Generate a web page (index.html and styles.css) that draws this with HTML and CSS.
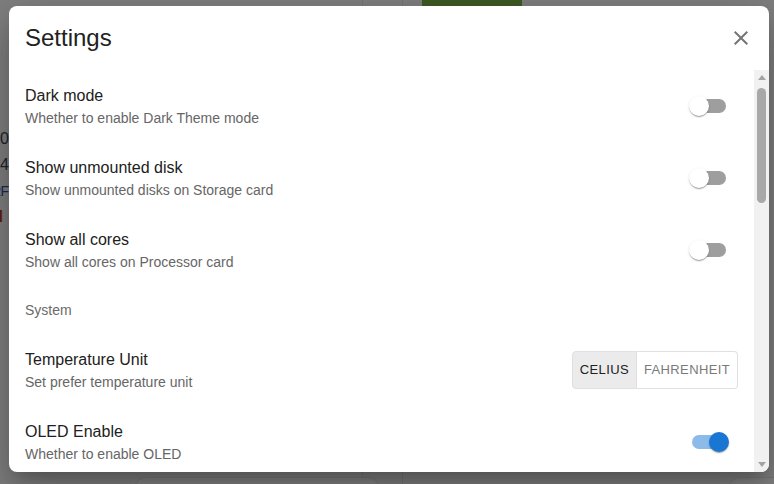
FILE: index.html
```html
<!DOCTYPE html>
<html lang="en">
<head>
<meta charset="utf-8">
<title>Settings</title>
<link rel="stylesheet" href="styles.css">
</head>
<body>
<div class="backdrop">
  <div class="bg-line bg-line-a"></div>
  <div class="bg-line bg-line-b"></div>
  <div class="bg-green"></div>
  <div class="bg-texts">
    <span class="t-dark">100</span>
    <span class="t-dark">24</span>
    <span class="t-navy">ERF</span>
    <span class="t-red">l</span>
  </div>
  <div class="bg-card bg-card-a"></div>
  <div class="bg-card bg-card-b"></div>
</div>

<div class="dialog" role="dialog" aria-label="Settings">
  <header class="dialog-header">
    <h2 class="dialog-title">Settings</h2>
    <button class="close-btn" aria-label="close">
      <svg viewBox="0 0 24 24" width="24" height="24"><path d="M19 6.41 17.59 5 12 10.59 6.41 5 5 6.41 10.59 12 5 17.59 6.41 19 12 13.41 17.59 19 19 17.59 13.41 12z" fill="currentColor"/></svg>
    </button>
  </header>
  <div class="dialog-body">
    <ul class="list">
      <li class="item">
        <div class="item-text">
          <div class="primary">Dark mode</div>
          <div class="secondary">Whether to enable Dark Theme mode</div>
        </div>
        <span class="switch"><span class="track"></span><span class="thumb"></span></span>
      </li>
      <li class="item">
        <div class="item-text">
          <div class="primary">Show unmounted disk</div>
          <div class="secondary">Show unmounted disks on Storage card</div>
        </div>
        <span class="switch"><span class="track"></span><span class="thumb"></span></span>
      </li>
      <li class="item">
        <div class="item-text">
          <div class="primary">Show all cores</div>
          <div class="secondary">Show all cores on Processor card</div>
        </div>
        <span class="switch"><span class="track"></span><span class="thumb"></span></span>
      </li>
      <li class="subheader">System</li>
      <li class="item">
        <div class="item-text">
          <div class="primary">Temperature Unit</div>
          <div class="secondary">Set prefer temperature unit</div>
        </div>
        <div class="toggle-group">
          <button class="toggle selected">Celius</button>
          <button class="toggle">Fahrenheit</button>
        </div>
      </li>
      <li class="item">
        <div class="item-text">
          <div class="primary">OLED Enable</div>
          <div class="secondary">Whether to enable OLED</div>
        </div>
        <span class="switch on"><span class="track"></span><span class="thumb"></span></span>
      </li>
    </ul>
    <div class="scrollbar">
      <div class="sb-btn"><span class="tri-up"></span></div>
      <div class="sb-track"><div class="sb-thumb"></div></div>
      <div class="sb-btn"><span class="tri-down"></span></div>
    </div>
  </div>
</div>
</body>
</html>
```

FILE: styles.css
```css
* { box-sizing: border-box; }

html, body {
  margin: 0;
  padding: 0;
  width: 774px;
  height: 484px;
  overflow: hidden;
}

body {
  background: #7f7f7f;
  font-family: "Liberation Sans", Arial, sans-serif;
  position: relative;
}

.backdrop {
  position: absolute;
  inset: 0;
  overflow: hidden;
}

.bg-line {
  position: absolute;
  top: 0;
  bottom: 0;
  width: 1px;
  background: #767676;
}
.bg-line-a { left: 362px; }
.bg-line-b { left: 402px; }

.bg-green {
  position: absolute;
  left: 422px;
  top: 0;
  width: 100px;
  height: 8px;
  background: #3e5a23;
  border-radius: 0 0 3px 3px;
}

.bg-texts {
  position: absolute;
  right: 765px;
  top: 126px;
  display: flex;
  flex-direction: column;
  align-items: flex-end;
  font-size: 16px;
  line-height: 26px;
}
.t-dark { color: #1d2330; }
.t-navy { color: #1b2a52; font-size: 14px; letter-spacing: -1px; margin-right: 1px; }
.t-red { color: #5e2008; font-weight: bold; margin-right: 6px; }

.bg-card {
  position: absolute;
  top: 477px;
  height: 40px;
  background: #838383;
  border: 1px solid #777;
  border-radius: 12px;
}
.bg-card-a { left: 134px; width: 246px; }
.bg-card-b { left: 728px; width: 80px; }

.dialog {
  position: absolute;
  left: 9px;
  top: 6px;
  width: 760px;
  height: 466px;
  background: #fff;
  border-radius: 8px;
  box-shadow: 0 11px 15px -7px rgba(0,0,0,0.2), 0 24px 38px 3px rgba(0,0,0,0.14), 0 9px 46px 8px rgba(0,0,0,0.12);
  display: flex;
  flex-direction: column;
  overflow: hidden;
}

.dialog-header {
  height: 64px;
  flex: none;
  display: flex;
  align-items: center;
  justify-content: space-between;
  padding: 0 16px;
}

.dialog-title {
  margin: 0;
  font-size: 24px;
  font-weight: normal;
  color: #212121;
  line-height: 32px;
}

.close-btn {
  border: 0;
  background: none;
  padding: 0;
  width: 24px;
  height: 24px;
  color: #757575;
  display: flex;
}

.dialog-body {
  flex: 1;
  display: flex;
  min-height: 0;
}

.list {
  flex: 1;
  margin: 0;
  padding: 0;
  list-style: none;
  overflow: hidden;
}

.item {
  display: flex;
  align-items: center;
  justify-content: space-between;
  padding: 14px 16px;
  height: 72px;
}

.primary {
  font-size: 16px;
  line-height: 24px;
  color: #212121;
}

.secondary {
  font-size: 14px;
  line-height: 20px;
  color: #666;
}

.subheader {
  height: 48px;
  line-height: 48px;
  padding: 0 16px;
  font-size: 14px;
  color: #6a6a6a;
}

.switch {
  position: relative;
  width: 58px;
  height: 38px;
  flex: none;
}

.track {
  position: absolute;
  left: 12px;
  top: 12px;
  width: 34px;
  height: 14px;
  border-radius: 7px;
  background: #9e9e9e;
}

.thumb {
  position: absolute;
  left: 9px;
  top: 9px;
  width: 20px;
  height: 20px;
  border-radius: 50%;
  background: #fff;
  box-shadow: 0 2px 1px -1px rgba(0,0,0,0.2), 0 1px 1px 0 rgba(0,0,0,0.14), 0 1px 3px 0 rgba(0,0,0,0.12);
}

.switch.on .track { background: #8cbbe9; }
.switch.on .thumb { left: 29px; background: #1976d2; }

.toggle-group {
  display: flex;
  flex: none;
}

.toggle {
  font-family: "Liberation Sans", Arial, sans-serif;
  font-size: 13px;
  line-height: 22.75px;
  letter-spacing: 0.37px;
  text-transform: uppercase;
  padding: 7px 7px;
  border: 1px solid #e0e0e0;
  background: #fff;
  color: #7a7a7a;
  margin: 0;
}

.toggle:first-child {
  border-radius: 4px 0 0 4px;
}

.toggle + .toggle {
  border-left: 0;
  border-radius: 0 4px 4px 0;
}

.toggle.selected {
  background: #ebebeb;
  color: #212121;
}

.scrollbar {
  width: 15px;
  flex: none;
  background: #f1f1f1;
  display: flex;
  flex-direction: column;
}

.sb-btn {
  height: 15px;
  flex: none;
  display: flex;
  align-items: center;
  justify-content: center;
}

.tri-up {
  width: 0;
  height: 0;
  border-left: 4px solid transparent;
  border-right: 4px solid transparent;
  border-bottom: 5px solid #a3a3a3;
}

.tri-down {
  width: 0;
  height: 0;
  border-left: 4px solid transparent;
  border-right: 4px solid transparent;
  border-top: 5px solid #a3a3a3;
}

.sb-track {
  flex: 1;
  padding: 3px 3px 0 3px;
}

.sb-thumb {
  height: 115px;
  width: 9px;
  border-radius: 5px;
  background: #a8a8a8;
}
```
